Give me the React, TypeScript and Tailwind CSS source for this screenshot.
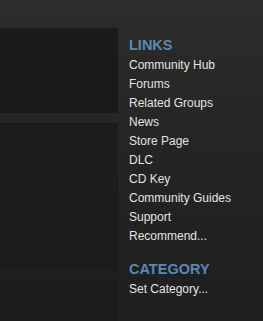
const links = [
  "Community Hub",
  "Forums",
  "Related Groups",
  "News",
  "Store Page",
  "DLC",
  "CD Key",
  "Community Guides",
  "Support",
  "Recommend...",
]

export default function App() {
  return (
    <div
      className="flex h-[321px] w-[263px] overflow-hidden bg-gradient-to-b from-[#2d2c2a] via-[#242424] to-[#1f1f1f]"
      style={{ fontFamily: '"Liberation Sans", Arial, sans-serif' }}
    >
      {/* Left panels */}
      <div className="flex w-[118px] shrink-0 flex-col pt-[28px]">
        <div className="h-[85px] bg-[#1b1a19]" />
        <div className="h-[10px]" />
        <div className="h-[147px] bg-[#1c1c1c]" />
        <div className="h-[10px] bg-[#1f1f1f]" />
        <div className="flex-1 bg-[#1c1c1c]" />
      </div>

      {/* Right column */}
      <div className="flex-1 pl-[11px] pt-[36px]">
        <h2 className="mb-px text-[14.5px] font-bold uppercase leading-[19px] text-[#5b87b7]">Links</h2>
        <ul>
          {links.map((l) => (
            <li key={l} className="text-[12px] leading-[19px] text-[#e2e3e4]">
              {l}
            </li>
          ))}
        </ul>
        <h2 className="mb-px mt-[14px] text-[14.5px] font-bold uppercase leading-[19px] text-[#5b87b7]">Category</h2>
        <div className="text-[12px] leading-[19px] text-[#e2e3e4]">Set Category...</div>
      </div>
    </div>
  )
}
